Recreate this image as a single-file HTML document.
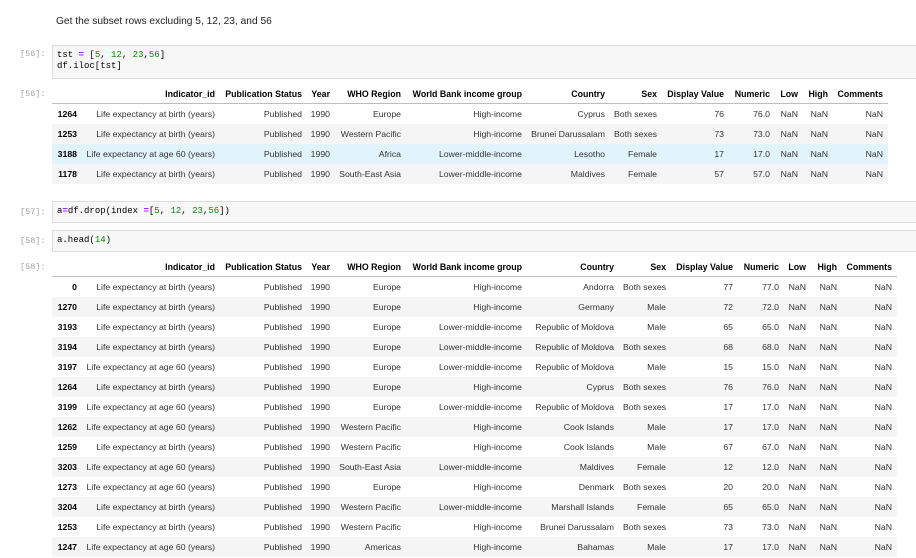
<!DOCTYPE html>
<html><head><meta charset="utf-8"><style>
body{margin:0;width:916px;height:558px;overflow:hidden;background:#fff;font-family:"Liberation Sans",Arial,sans-serif;color:#000;position:relative}
.abs{position:absolute}
.md{left:56px;top:16px;font-size:10.2px;color:#222}
.pr{font-family:"Liberation Mono",monospace;font-size:8.5px;color:#a0a0a0;left:20px}
.code{left:52px;width:870px;background:#f7f7f7;border:1px solid #dcdcdc;font-family:"Liberation Mono",monospace;font-size:9px;line-height:11px;padding:4px 0 0 4px;box-sizing:border-box;color:#000}
.n{color:#080}.o{color:#a2f;font-weight:bold}.p{color:#000}
table{position:absolute;left:52px;border-collapse:collapse;table-layout:fixed;font-size:8.7px}
td,th{height:20px;padding:0 5px 0 0;text-align:right;white-space:nowrap;overflow:hidden;color:#333}
th{font-weight:bold;font-size:8.8px;color:#000;border-bottom:1px solid #bdbdbd;height:19px;padding-bottom:0}
td.i{font-weight:bold;color:#000}
tr.g td{background:#f5f5f5}
tr.h td{background:#e1f4fb}
</style></head><body>
<div class="abs md">Get the subset rows excluding 5, 12, 23, and 56</div>
<div class="abs pr" style="top:49px">[56]:</div>
<div class="abs code" style="top:45px;height:34px">tst <span class="o">=</span> [<span class="n">5</span>, <span class="n">12</span>, <span class="n">23</span>,<span class="n">56</span>]<br>df.iloc[tst]</div>
<div class="abs pr" style="top:89px">[56]:</div>
<table style="top:84px;width:836px">
<colgroup><col style="width:30px"><col style="width:138px"><col style="width:87px"><col style="width:28px"><col style="width:71px"><col style="width:121px"><col style="width:83px"><col style="width:52px"><col style="width:67px"><col style="width:46px"><col style="width:28px"><col style="width:30px"><col style="width:55px"></colgroup>
<tr><th></th><th>Indicator_id</th><th>Publication Status</th><th>Year</th><th>WHO Region</th><th>World Bank income group</th><th>Country</th><th>Sex</th><th>Display Value</th><th>Numeric</th><th>Low</th><th>High</th><th>Comments</th></tr>
<tr><td class="i">1264</td><td>Life expectancy at birth (years)</td><td>Published</td><td>1990</td><td>Europe</td><td>High-income</td><td>Cyprus</td><td>Both sexes</td><td>76</td><td>76.0</td><td>NaN</td><td>NaN</td><td>NaN</td></tr>
<tr class="g"><td class="i">1253</td><td>Life expectancy at birth (years)</td><td>Published</td><td>1990</td><td>Western Pacific</td><td>High-income</td><td>Brunei Darussalam</td><td>Both sexes</td><td>73</td><td>73.0</td><td>NaN</td><td>NaN</td><td>NaN</td></tr>
<tr class="h"><td class="i">3188</td><td>Life expectancy at age 60 (years)</td><td>Published</td><td>1990</td><td>Africa</td><td>Lower-middle-income</td><td>Lesotho</td><td>Female</td><td>17</td><td>17.0</td><td>NaN</td><td>NaN</td><td>NaN</td></tr>
<tr class="g"><td class="i">1178</td><td>Life expectancy at birth (years)</td><td>Published</td><td>1990</td><td>South-East Asia</td><td>Lower-middle-income</td><td>Maldives</td><td>Female</td><td>57</td><td>57.0</td><td>NaN</td><td>NaN</td><td>NaN</td></tr>
</table>
<div class="abs pr" style="top:207px">[57]:</div>
<div class="abs code" style="top:201px;height:22px">a<span class="o">=</span>df.drop(index <span class="o">=</span>[<span class="n">5</span>, <span class="n">12</span>, <span class="n">23</span>,<span class="n">56</span>])</div>
<div class="abs pr" style="top:236px">[58]:</div>
<div class="abs code" style="top:230px;height:22px">a.head(<span class="n">14</span>)</div>
<div class="abs pr" style="top:262px">[58]:</div>
<table style="top:257px;width:845px">
<colgroup><col style="width:30px"><col style="width:138px"><col style="width:87px"><col style="width:28px"><col style="width:71px"><col style="width:121px"><col style="width:92px"><col style="width:52px"><col style="width:67px"><col style="width:46px"><col style="width:27px"><col style="width:31px"><col style="width:55px"></colgroup>
<tr><th></th><th>Indicator_id</th><th>Publication Status</th><th>Year</th><th>WHO Region</th><th>World Bank income group</th><th>Country</th><th>Sex</th><th>Display Value</th><th>Numeric</th><th>Low</th><th>High</th><th>Comments</th></tr>
<tr><td class="i">0</td><td>Life expectancy at birth (years)</td><td>Published</td><td>1990</td><td>Europe</td><td>High-income</td><td>Andorra</td><td>Both sexes</td><td>77</td><td>77.0</td><td>NaN</td><td>NaN</td><td>NaN</td></tr>
<tr class="g"><td class="i">1270</td><td>Life expectancy at birth (years)</td><td>Published</td><td>1990</td><td>Europe</td><td>High-income</td><td>Germany</td><td>Male</td><td>72</td><td>72.0</td><td>NaN</td><td>NaN</td><td>NaN</td></tr>
<tr><td class="i">3193</td><td>Life expectancy at birth (years)</td><td>Published</td><td>1990</td><td>Europe</td><td>Lower-middle-income</td><td>Republic of Moldova</td><td>Male</td><td>65</td><td>65.0</td><td>NaN</td><td>NaN</td><td>NaN</td></tr>
<tr class="g"><td class="i">3194</td><td>Life expectancy at birth (years)</td><td>Published</td><td>1990</td><td>Europe</td><td>Lower-middle-income</td><td>Republic of Moldova</td><td>Both sexes</td><td>68</td><td>68.0</td><td>NaN</td><td>NaN</td><td>NaN</td></tr>
<tr><td class="i">3197</td><td>Life expectancy at age 60 (years)</td><td>Published</td><td>1990</td><td>Europe</td><td>Lower-middle-income</td><td>Republic of Moldova</td><td>Male</td><td>15</td><td>15.0</td><td>NaN</td><td>NaN</td><td>NaN</td></tr>
<tr class="g"><td class="i">1264</td><td>Life expectancy at birth (years)</td><td>Published</td><td>1990</td><td>Europe</td><td>High-income</td><td>Cyprus</td><td>Both sexes</td><td>76</td><td>76.0</td><td>NaN</td><td>NaN</td><td>NaN</td></tr>
<tr><td class="i">3199</td><td>Life expectancy at age 60 (years)</td><td>Published</td><td>1990</td><td>Europe</td><td>Lower-middle-income</td><td>Republic of Moldova</td><td>Both sexes</td><td>17</td><td>17.0</td><td>NaN</td><td>NaN</td><td>NaN</td></tr>
<tr class="g"><td class="i">1262</td><td>Life expectancy at age 60 (years)</td><td>Published</td><td>1990</td><td>Western Pacific</td><td>High-income</td><td>Cook Islands</td><td>Male</td><td>17</td><td>17.0</td><td>NaN</td><td>NaN</td><td>NaN</td></tr>
<tr><td class="i">1259</td><td>Life expectancy at birth (years)</td><td>Published</td><td>1990</td><td>Western Pacific</td><td>High-income</td><td>Cook Islands</td><td>Male</td><td>67</td><td>67.0</td><td>NaN</td><td>NaN</td><td>NaN</td></tr>
<tr class="g"><td class="i">3203</td><td>Life expectancy at age 60 (years)</td><td>Published</td><td>1990</td><td>South-East Asia</td><td>Lower-middle-income</td><td>Maldives</td><td>Female</td><td>12</td><td>12.0</td><td>NaN</td><td>NaN</td><td>NaN</td></tr>
<tr><td class="i">1273</td><td>Life expectancy at age 60 (years)</td><td>Published</td><td>1990</td><td>Europe</td><td>High-income</td><td>Denmark</td><td>Both sexes</td><td>20</td><td>20.0</td><td>NaN</td><td>NaN</td><td>NaN</td></tr>
<tr class="g"><td class="i">3204</td><td>Life expectancy at birth (years)</td><td>Published</td><td>1990</td><td>Western Pacific</td><td>Lower-middle-income</td><td>Marshall Islands</td><td>Female</td><td>65</td><td>65.0</td><td>NaN</td><td>NaN</td><td>NaN</td></tr>
<tr><td class="i">1253</td><td>Life expectancy at birth (years)</td><td>Published</td><td>1990</td><td>Western Pacific</td><td>High-income</td><td>Brunei Darussalam</td><td>Both sexes</td><td>73</td><td>73.0</td><td>NaN</td><td>NaN</td><td>NaN</td></tr>
<tr class="g"><td class="i">1247</td><td>Life expectancy at age 60 (years)</td><td>Published</td><td>1990</td><td>Americas</td><td>High-income</td><td>Bahamas</td><td>Male</td><td>17</td><td>17.0</td><td>NaN</td><td>NaN</td><td>NaN</td></tr>
</table>
</body></html>
